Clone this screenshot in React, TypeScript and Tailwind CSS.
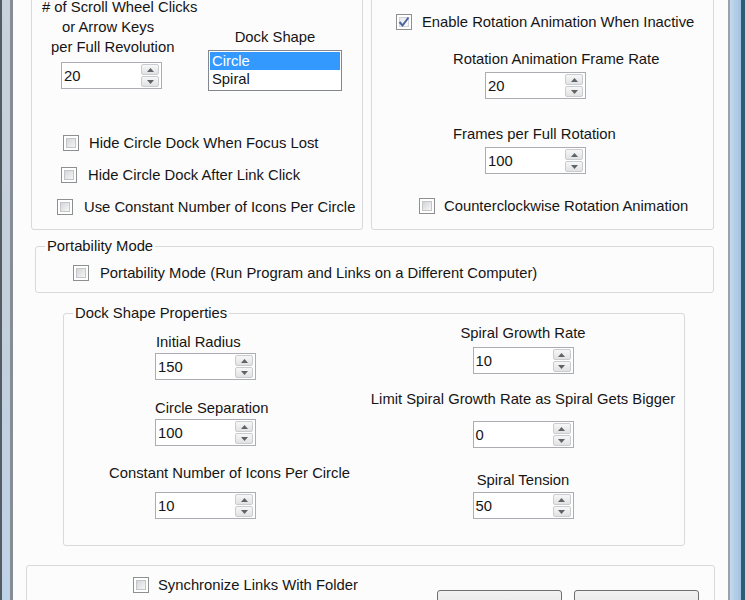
import React from "react";

function Spin({ v, className = "" }: { v: string; className?: string }) {
  return (
    <div className={`flex h-[27px] w-[101px] shrink-0 items-center border border-[#abadb3] bg-white ${className}`}>
      <span className="flex-1 pl-[2px] leading-[20px]">{v}</span>
      <div className="mr-[2px] flex h-[23px] w-[18px] flex-col gap-[1px]">
        <div className="flex flex-1 items-center justify-center rounded-[2px] border border-[#c9ccd0] bg-linear-to-b from-[#f7f7f7] to-[#e2e2e2]">
          <svg width="7" height="4" viewBox="0 0 7 4">
            <path d="M0 4 L3.5 0 L7 4 Z" fill="#5f6468" />
          </svg>
        </div>
        <div className="flex flex-1 items-center justify-center rounded-[2px] border border-[#c9ccd0] bg-linear-to-b from-[#f7f7f7] to-[#e2e2e2]">
          <svg width="7" height="4" viewBox="0 0 7 4">
            <path d="M0 0 L3.5 4 L7 0 Z" fill="#5f6468" />
          </svg>
        </div>
      </div>
    </div>
  );
}

function Check({ checked = false }: { checked?: boolean }) {
  return (
    <div className="h-[16px] w-[16px] shrink-0 border border-[#8e8f8f] bg-white p-[2px]">
      <div
        className={`flex h-full w-full items-center justify-center border ${
          checked
            ? "border-[#d0d4da] bg-linear-to-br from-[#e6e9ee] to-[#fbfbfb]"
            : "border-[#c3c5c8] bg-linear-to-br from-[#d3d6da] to-[#f6f6f6]"
        }`}
      >
        {checked && (
          <svg width="12" height="12" viewBox="0 0 12 12" className="shrink-0">
            <path d="M1.5 6 L4.5 9.5 L10.5 1.5" fill="none" stroke="#4a64a0" strokeWidth="2" />
          </svg>
        )}
      </div>
    </div>
  );
}

function Row({
  checked = false,
  label,
  className = "",
}: {
  checked?: boolean;
  label: string;
  className?: string;
}) {
  return (
    <div className={`flex h-[20px] items-center whitespace-nowrap ${className}`}>
      <Check checked={checked} />
      <span>{label}</span>
    </div>
  );
}

function Button() {
  return (
    <div className="h-[26px] w-[125px] rounded-[3px] border border-[#707070] bg-linear-to-b from-[#f2f2f2] to-[#e3e3e3]" />
  );
}

export default function App() {
  return (
    <div className="flex h-[600px] w-[745px] overflow-hidden font-['Liberation_Sans',Arial,sans-serif] text-[14.8px] leading-[20px] text-[#151515]">
      {/* left window frame */}
      <div className="flex w-[13px] shrink-0">
        <div className="w-[2px] bg-[#555b62]" />
        <div className="w-[8px] bg-linear-to-b from-[#c8d2dc] via-[#c3cfdb] to-[#bed2e8]" />
        <div className="w-[3px] bg-[#868d94]" />
      </div>

      {/* content */}
      <div className="flex w-[715px] shrink-0 flex-col bg-[#fcfcfc]">
        {/* top row */}
        <div className="mt-[-13px] ml-[18px] flex gap-[8px]">
          {/* top-left box */}
          <div className="h-[243px] w-[332px] shrink-0 rounded-[3px] border border-[#d7d9db] pt-[9px]">
            <div className="flex items-start">
              <div className="ml-[8px] w-[158px] whitespace-nowrap">
                <div className="ml-[2px]"># of Scroll Wheel Clicks</div>
                <div className="ml-[22px]">or Arrow Keys</div>
                <div className="ml-[11px]">per Full Revolution</div>
                <Spin v="20" className="mt-[5px] ml-[21px]" />
              </div>
              <div className="mt-[30px] ml-[10px] w-[134px]">
                <div className="text-center">Dock Shape</div>
                <div className="mt-[3px] h-[41px] border border-[#828790] bg-white p-[1px]">
                  <div className="h-[18px] bg-[#3399ff] pl-[2px] leading-[18px] text-white">Circle</div>
                  <div className="h-[18px] pl-[2px] leading-[18px]">Spiral</div>
                </div>
              </div>
            </div>
            <div className="mt-[42px] flex flex-col gap-[12px]">
              <Row label="Hide Circle Dock When Focus Lost" className="ml-[31px] gap-[10px]" />
              <Row label="Hide Circle Dock After Link Click" className="ml-[29px] gap-[11px]" />
              <Row label="Use Constant Number of Icons Per Circle" className="ml-[25px] gap-[11px]" />
            </div>
          </div>

          {/* top-right box */}
          <div className="flex h-[243px] w-[343px] shrink-0 flex-col items-start rounded-[3px] border border-[#d7d9db] pt-[24px]">
            <Row checked label="Enable Rotation Animation When Inactive" className="ml-[24px] gap-[10px]" />
            <div className="mt-[17px] ml-[81px] whitespace-nowrap">Rotation Animation Frame Rate</div>
            <Spin v="20" className="mt-[3px] ml-[113px]" />
            <div className="mt-[25px] ml-[81px] whitespace-nowrap">Frames per Full Rotation</div>
            <Spin v="100" className="mt-[3px] ml-[113px]" />
            <Row label="Counterclockwise Rotation Animation" className="mt-[22px] ml-[47px] gap-[9px]" />
          </div>
        </div>

        {/* Portability Mode */}
        <fieldset className="mt-[7px] ml-[22px] w-[679px] shrink-0 rounded-[3px] border border-[#d7d9db] pb-[9px]">
          <legend className="ml-[9px] px-[2px] leading-[18px]">Portability Mode</legend>
          <Row
            label="Portability Mode (Run Program and Links on a Different Computer)"
            className="mt-[8px] ml-[37px] gap-[11px]"
          />
        </fieldset>

        {/* Dock Shape Properties */}
        <fieldset className="mt-[11px] ml-[50px] w-[622px] shrink-0 rounded-[3px] border border-[#d7d9db] pb-[26px]">
          <legend className="ml-[9px] px-[2px] leading-[18px]">Dock Shape Properties</legend>
          <div className="flex items-start">
            <div className="ml-[45px] flex w-[264px] flex-col items-start whitespace-nowrap pt-[10px]">
              <div className="ml-[47px]">Initial Radius</div>
              <Spin v="150" className="mt-[1px] ml-[46px]" />
              <div className="mt-[18px] ml-[46px]">Circle Separation</div>
              <Spin v="100" className="mt-[1px] ml-[46px]" />
              <div className="mt-[17px]">Constant Number of Icons Per Circle</div>
              <Spin v="10" className="mt-[9px] ml-[46px]" />
            </div>
            <div className="flex w-[300px] flex-col items-center whitespace-nowrap pt-[1px]">
              <div>Spiral Growth Rate</div>
              <Spin v="10" className="mt-[4px]" />
              <div className="mt-[15px]">Limit Spiral Growth Rate as Spiral Gets Bigger</div>
              <Spin v="0" className="mt-[12px]" />
              <div className="mt-[22px]">Spiral Tension</div>
              <Spin v="50" className="mt-[2px]" />
            </div>
          </div>
        </fieldset>

        {/* bottom box */}
        <div className="mt-[19px] ml-[13px] flex h-[60px] w-[689px] shrink-0 items-start rounded-[3px] border border-[#d7d9db]">
          <Row label="Synchronize Links With Folder" className="mt-[9px] ml-[106px] gap-[9px]" />
          <div className="mt-[24px] mr-[15px] ml-auto flex gap-[12px]">
            <Button />
            <Button />
          </div>
        </div>
      </div>

      {/* right window frame */}
      <div className="flex w-[17px] shrink-0">
        <div className="w-[2px] bg-[#9ca2a8]" />
        <div className="w-[11px] bg-linear-to-r from-[#c4d9ee] to-[#a2c2e2]" />
        <div className="w-[4px] bg-[#2f5e72]" />
      </div>
    </div>
  );
}
